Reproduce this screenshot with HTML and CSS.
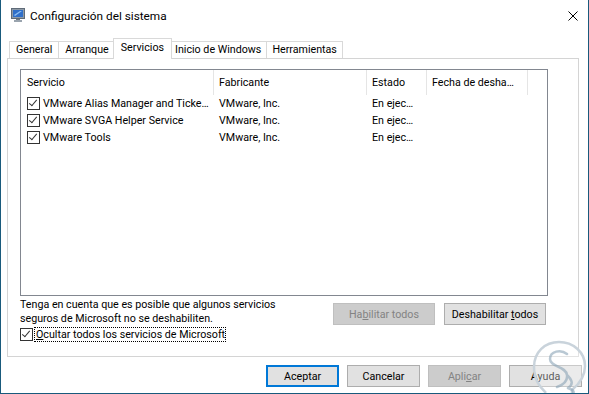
FILE: index.html
```html
<!DOCTYPE html>
<html lang="es">
<head>
  <meta charset="UTF-8" />
  <title>Configuración del sistema</title>
  <link rel="stylesheet" href="styles.css">
</head>
<body>
  <div class="window">
    <div class="titlebar">
      <svg class="app-icon" width="14" height="14" viewBox="0 0 14 14">
        <rect x="0.5" y="0.5" width="13" height="10" fill="#8e9aa6" stroke="#5f6b78"/>
        <rect x="2" y="2" width="10" height="7" fill="#2f6fc9"/>
        <path d="M3 7 L9 3 L11 3 L4 8 Z" fill="#8fc0f2"/>
        <rect x="5" y="11" width="4" height="1" fill="#6d7884"/>
        <rect x="3" y="12" width="8" height="2" fill="#9aa4ae"/>
      </svg>
      <span class="title">Configuración del sistema</span>
      <svg class="close" width="10" height="10" viewBox="0 0 10 10">
        <path d="M0.5 0.5 L9.5 9.5 M9.5 0.5 L0.5 9.5" stroke="#000" stroke-width="1"/>
      </svg>
    </div>

    <div class="tabs">
      <div class="tab">General</div>
      <div class="tab">Arranque</div>
      <div class="tab active">Servicios</div>
      <div class="tab">Inicio de Windows</div>
      <div class="tab">Herramientas</div>
    </div>

    <div class="page">
      <div class="listview">
        <div class="lv-row lv-head">
          <div class="cell first">Servicio</div>
          <div class="cell">Fabricante</div>
          <div class="cell">Estado</div>
          <div class="cell">Fecha de desha…</div>
        </div>
        <div class="lv-row">
          <div class="cell first"><span class="chk"></span>VMware Alias Manager and Ticke…</div>
          <div class="cell">VMware, Inc.</div>
          <div class="cell">En ejec…</div>
          <div class="cell"></div>
        </div>
        <div class="lv-row">
          <div class="cell first"><span class="chk"></span>VMware SVGA Helper Service</div>
          <div class="cell">VMware, Inc.</div>
          <div class="cell">En ejec…</div>
          <div class="cell"></div>
        </div>
        <div class="lv-row">
          <div class="cell first"><span class="chk"></span>VMware Tools</div>
          <div class="cell">VMware, Inc.</div>
          <div class="cell">En ejec…</div>
          <div class="cell"></div>
        </div>
      </div>

      <div class="page-bottom">
        <div class="note">
          <p>Tenga en cuenta que es posible que algunos servicios<br>seguros de Microsoft no se deshabiliten.</p>
          <div class="hide-line">
            <span class="chk"></span>
            <span class="focus"><u>O</u>cultar todos los servicios de Microsoft</span>
          </div>
        </div>
        <div class="page-buttons">
          <button class="btn wide" disabled>Ha<u>b</u>ilitar todos</button>
          <button class="btn wide">Deshabilitar <u>t</u>odos</button>
        </div>
      </div>
    </div>

    <div class="footer">
      <button class="btn default">Aceptar</button>
      <button class="btn">Cancelar</button>
      <button class="btn" disabled>Apli<u>c</u>ar</button>
      <button class="btn">Ayuda</button>
    </div>

    <svg class="watermark" width="60" height="60" viewBox="0 0 60 60">
      <path d="M16 57 C10 51 4 44 4 31 C4 16 15 6 29 6 C43 6 55 16 55 30 C55 42 48 49 42 54 L42 60"
            fill="rgba(255,255,255,0.35)" stroke="#c9d3db" stroke-width="2.5"/>
      <path d="M37 18 C31 13 20 15 20 23 C20 31 36 30 37 39 C38 47 30 50 27 51 M37 39 C42 44 44 48 38 52 M38 52 C44 54 46 57 40 59"
            fill="none" stroke="#8aa3b6" stroke-width="2.5" stroke-linecap="round" opacity="0.6"/>
    </svg>
  </div>
</body>
</html>
```

FILE: styles.css
```css
body {
  margin: 0;
  background: #fff;
  font-family: Roboto, "Liberation Sans", sans-serif;
  font-size: 10.7px;
  color: #000;
}
.window {
  position: relative;
  width: 589px;
  height: 394px;
  box-sizing: border-box;
  border: 1px solid #195a7c;
  border-top: none;
  background: #fff;
  overflow: hidden;
}

/* title bar */
.titlebar {
  display: flex;
  align-items: center;
  height: 31px;
  padding: 0 10px 0 10px;
}
.app-icon {
  margin-top: -2px;
}
.title {
  margin-left: 5px;
  font-size: 11.8px;
}
.close {
  margin-left: auto;
  margin-top: 1px;
}

/* tabs */
.tabs {
  display: flex;
  align-items: flex-end;
  margin: 7px 0 0 8px;
}
.tab {
  height: 16px;
  line-height: 16px;
  padding: 0 6px;
  border: 1px solid #d9d9d9;
  border-bottom: none;
  margin-left: -1px;
  background: #fff;
}
.tab:first-child {
  margin-left: 0;
}
.tab:nth-child(n+4) {
  padding: 0 5px;
}
.tab.active {
  position: relative;
  z-index: 1;
  height: 20px;
  line-height: 18px;
  padding: 0 7px;
  margin: 0 -2px -1px -3px;
}

/* tab page */
.page {
  box-sizing: border-box;
  width: 572px;
  height: 299px;
  margin-left: 6px;
  padding: 10px 0 0 12px;
  border: 1px solid #d4d4d4;
}
.listview {
  box-sizing: border-box;
  width: 528px;
  height: 227px;
  border: 1px solid #828790;
}
.lv-row {
  display: grid;
  grid-template-columns: 193px 153px 60px 101px;
  height: 17px;
  line-height: 17px;
}
.lv-head {
  height: 25px;
  line-height: 25px;
}
.cell {
  padding-left: 5px;
  white-space: nowrap;
  overflow: hidden;
}
.cell.first {
  display: flex;
  align-items: center;
  padding-left: 6px;
}
.lv-head .cell {
  border-right: 1px solid #e5e5e5;
}

/* checkbox */
.chk {
  position: relative;
  flex: none;
  width: 13px;
  height: 13px;
  box-sizing: border-box;
  border: 1px solid #333;
  margin-right: 3px;
  background: #fff;
}
.chk::after {
  content: "";
  position: absolute;
  left: 3px;
  top: 0;
  width: 3px;
  height: 7px;
  border: solid #333;
  border-width: 0 1px 1px 0;
  transform: rotate(40deg);
}

.page-bottom {
  display: flex;
}
.note p {
  margin: 2px 0 0 0;
  line-height: 14px;
}
.hide-line {
  display: flex;
  align-items: center;
  margin-top: 1px;
}
.hide-line .chk {
  margin-right: 1px;
}
.focus {
  border: 1px dotted #000;
  padding: 0 0 0 1px;
  line-height: 13px;
}

.page-buttons {
  display: flex;
  gap: 9px;
  margin: 7px 2px 0 auto;
  padding-right: 30px;
}

/* buttons */
.btn {
  box-sizing: border-box;
  width: 73px;
  height: 22px;
  padding: 0;
  font: inherit;
  color: #000;
  background: #e1e1e1;
  border: 1px solid #adadad;
}
.btn.wide {
  width: 102px;
}
.btn.default {
  border: 2px solid #0078d7;
}
.btn:disabled {
  background: #cccccc;
  border-color: #bfbfbf;
  color: #838383;
}

.footer {
  display: flex;
  justify-content: flex-end;
  gap: 8px;
  margin-top: 8px;
  padding-right: 6px;
}

.watermark {
  position: absolute;
  left: 529px;
  top: 336px;
}
```
